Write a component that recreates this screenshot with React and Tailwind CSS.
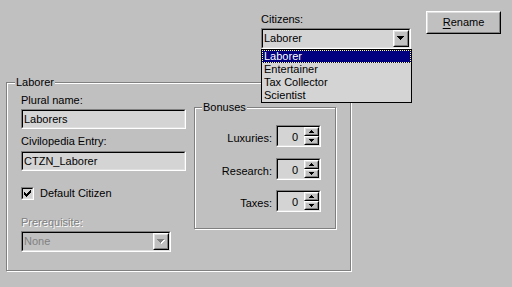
import React from "react";

const FIELD = "bg-[#d4d4d4]";

function Sunken({ className = "", inner = "", children }) {
    return (
        <div className={`border border-t-[#808080] border-l-[#808080] border-r-white border-b-white ${className}`}>
            <div className={`h-full border border-t-black border-l-black border-r-[#dfdfdf] border-b-[#dfdfdf] ${inner}`}>
                {children}
            </div>
        </div>
    );
}

function Raised({ className = "", children }) {
    return (
        <div className={`border border-t-white border-l-white border-r-black border-b-black ${className}`}>
            <div className="h-full border border-t-[#dfdfdf] border-l-[#dfdfdf] border-r-[#808080] border-b-[#808080] bg-[#c0c0c0] flex items-center justify-center">
                {children}
            </div>
        </div>
    );
}

// pixel staircase triangles
function DownArrow({ disabled }) {
    return (
        <svg width="8" height="5" viewBox="0 0 8 5" shapeRendering="crispEdges">
            {disabled && (
                <path d="M1 1h7v1h-1v1h-1v1h-1v1h-1v-1h-1v-1h-1v-1h-1z" fill="#fff" />
            )}
            <path
                d="M0 0h7v1h-1v1h-1v1h-1v1h-1v-1h-1v-1h-1v-1h-1z"
                fill={disabled ? "#808080" : "#000"}
            />
        </svg>
    );
}

function SpinArrow({ up }) {
    return (
        <svg width="5" height="3" viewBox="0 0 5 3" shapeRendering="crispEdges">
            {up ? (
                <path d="M2 0h1v1h1v1h1v1h-5v-1h1v-1h1z" fill="#000" />
            ) : (
                <path d="M0 0h5v1h-1v1h-1v1h-1v-1h-1v-1h-1z" fill="#000" />
            )}
        </svg>
    );
}

function Combo({ value, disabled, className = "" }) {
    return (
        <Sunken className={`h-[21px] ${className}`} inner={disabled ? "bg-[#c0c0c0]" : FIELD}>
            <div className="flex h-full">
                <span className={`flex-1 pl-[1px] leading-[16px] ${disabled ? "text-[#808080]" : "text-black"}`}>
                    {value}
                </span>
                <Raised className="w-[16px] h-full">
                    <DownArrow disabled={disabled} />
                </Raised>
            </div>
        </Sunken>
    );
}

function Group({ label, labelLeft, className = "", children }) {
    return (
        <div className={`relative border border-[#808080] shadow-[inset_1px_1px_0_#fff,1px_1px_0_#fff] ${className}`}>
            <span className={`absolute -top-[7px] px-[1px] bg-[#c0c0c0] leading-[13px] ${labelLeft}`}>{label}</span>
            {children}
        </div>
    );
}

function TextField({ value, className = "" }) {
    return (
        <Sunken className={`h-[20px] ${className}`} inner={FIELD}>
            <span className="block pl-[1px] leading-[16px]">{value}</span>
        </Sunken>
    );
}

function Spin({ label, className = "" }) {
    return (
        <div className={`flex items-start gap-[4px] ${className}`}>
            <span className="mt-[7px] leading-[13px]">{label}</span>
            <Sunken className="w-[45px] h-[22px]" inner={FIELD}>
                <div className="flex h-full">
                    <span className="flex-1 text-right pr-[6px] pt-[4px] leading-[13px]">0</span>
                    <div className="w-[15px] flex flex-col">
                        <Raised className="h-[9px]">
                            <SpinArrow up />
                        </Raised>
                        <Raised className="h-[9px]">
                            <SpinArrow />
                        </Raised>
                    </div>
                </div>
            </Sunken>
        </div>
    );
}

const citizens = ["Laborer", "Entertainer", "Tax Collector", "Scientist"];

function CheckMark() {
    const px = [
        [6, 0], [5, 1], [6, 1], [0, 2], [4, 2], [5, 2], [6, 2],
        [0, 3], [1, 3], [3, 3], [4, 3], [5, 3],
        [0, 4], [1, 4], [2, 4], [3, 4], [4, 4],
        [1, 5], [2, 5], [3, 5], [2, 6],
    ];
    return (
        <svg width="7" height="7" viewBox="0 0 7 7" shapeRendering="crispEdges">
            {px.map(([x, y]) => (
                <rect key={`${x}-${y}`} x={x} y={y} width="1" height="1" fill="#000" />
            ))}
        </svg>
    );
}

export default function App() {
    return (
        <div className="w-[512px] h-[287px] overflow-hidden bg-[#c0c0c0] text-black text-[11px] leading-[13px] font-['Liberation_Sans',Arial,sans-serif] flex flex-col">
            {/* Top row */}
            <div className="flex items-start h-[82px] pl-[261px] pt-[11px] shrink-0">
                <div className="relative mt-[2px] w-[150px]">
                    <div className="h-[13px]">Citizens:</div>
                    <Combo value="Laborer" className="mt-[2px]" />
                    {/* open list */}
                    <div className={`absolute top-[36px] left-0 w-[151px] border border-black ${FIELD} z-10`}>
                        {citizens.map((c, i) => (
                            <div
                                key={c}
                                className={`h-[13px] pl-[2px] leading-[13px] ${i === 0
                                    ? "bg-[#000080] text-white outline-1 outline-dotted outline-[#ffff80] -outline-offset-1"
                                    : "text-black"
                                    }`}
                            >
                                {c}
                            </div>
                        ))}
                    </div>
                </div>
                <Raised className="ml-[15px] w-[75px] h-[23px]">
                    <span className="leading-[13px]">
                        <span className="underline underline-offset-2">R</span>ename
                    </span>
                </Raised>
            </div>

            {/* Laborer group */}
            <Group label="Laborer" labelLeft="left-[8px]" className="ml-[6px] w-[345px] h-[189px] shrink-0">
                <div className="flex items-start pl-[14px] pt-[11px]">
                    <div className="w-[165px] flex flex-col">
                        <div className="h-[13px]">Plural name:</div>
                        <TextField value="Laborers" className="mt-[2px]" />
                        <div className="h-[13px] mt-[6px]">Civilopedia Entry:</div>
                        <TextField value="CTZN_Laborer" className="mt-[3px]" />
                        <div className="mt-[16px] h-[13px] flex items-center gap-[6px]">
                            <Sunken className="w-[13px] h-[13px] shrink-0" inner={`${FIELD} flex items-center justify-center`}>
                                <CheckMark />
                            </Sunken>
                            <span>Default Citizen</span>
                        </div>
                        <div className="h-[13px] mt-[16px] text-[#808080] [text-shadow:1px_1px_0_#fff]">Prerequisite:</div>
                        <Combo value="None" disabled className="mt-[2px] w-[150px]" />
                    </div>

                    <Group label="Bonuses" labelLeft="left-[7px]" className="ml-[8px] mt-[13px] w-[142px] h-[122px]">
                        <div className="flex flex-col items-end pr-[14px] pt-[17px]">
                            <Spin label="Luxuries:" />
                            <Spin label="Research:" className="mt-[11px]" />
                            <Spin label="Taxes:" className="mt-[10px]" />
                        </div>
                    </Group>
                </div>
            </Group>
        </div>
    );
}
